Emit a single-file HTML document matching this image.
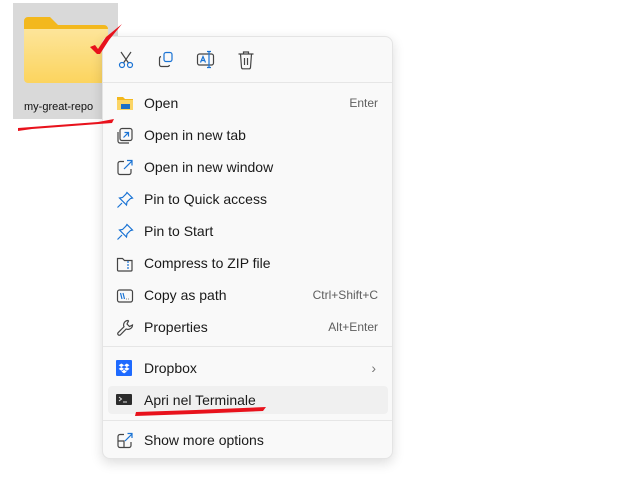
<!DOCTYPE html>
<html><head><meta charset="utf-8"><style>
*{margin:0;padding:0;box-sizing:border-box}
body{width:626px;height:480px;background:#fff;position:relative;overflow:hidden;font-family:"Segoe UI","Liberation Sans",sans-serif}
.sel{position:absolute;left:13px;top:3px;width:105px;height:116px;background:#d9d9d9}
.lbl{position:absolute;left:24px;top:101px;font-size:11px;color:#111;white-space:nowrap}
.menu{position:absolute;left:102px;top:36px;width:291px;height:423px;background:#f9f9f9;border:1px solid #e4e4e4;border-radius:8px;box-shadow:0 4px 12px rgba(0,0,0,.14)}
.it{position:absolute;left:0;width:289px;height:28px;font-size:14px;color:#1a1a1a}
.it .t{position:absolute;left:41px;top:50%;transform:translateY(-50%);white-space:nowrap}
.it .k{position:absolute;right:14px;top:50%;transform:translateY(-50%);font-size:12px;color:#5e5e5e}
.it svg{position:absolute;left:13px;top:6px}
.sep{position:absolute;left:0;width:289px;height:1px;background:#e6e6e6}
</style></head><body>
<div class="sel"></div>
<svg style="position:absolute;left:22px;top:15px" width="88" height="70" viewBox="0 0 88 70">
<defs><linearGradient id="g" x1="0" y1="0" x2="0" y2="1"><stop offset="0" stop-color="#fde59a"/><stop offset="1" stop-color="#fcd45e"/></linearGradient></defs>
<path d="M2 6a4 4 0 0 1 4-4h22l8 8h46a4 4 0 0 1 4 4v10H2z" fill="#f3b81d"/>
<path d="M2 14h84v50a4 4 0 0 1-4 4H6a4 4 0 0 1-4-4z" fill="url(#g)"/>
</svg>
<div class="lbl">my-great-repo</div>
<div class="menu">
<svg style="position:absolute;left:14px;top:14px" width="18" height="18" viewBox="0 0 18 18" fill="none" stroke="#1a73d4" stroke-width="1.2"><path d="M4 1l7.5 11M14 1L6.5 12" stroke="#444"/><circle cx="5" cy="14" r="2.5"/><circle cx="13" cy="14" r="2.5"/></svg>
<svg style="position:absolute;left:54px;top:14px" width="18" height="18" viewBox="0 0 18 18" fill="none" stroke-width="1.2"><rect x="7" y="1.5" width="8" height="9" rx="2" stroke="#1a73d4"/><path d="M4 5.5a2 2 0 0 0-1.5 2v6a2 2 0 0 0 2 2h6a2 2 0 0 0 2-1.5" stroke="#444"/></svg>
<svg style="position:absolute;left:93px;top:13px" width="20" height="20" viewBox="0 0 20 20" fill="none" stroke-width="1.2"><rect x="1.5" y="4" width="16" height="11" rx="2" stroke="#444"/><path d="M4.5 12.5l2.5-6 2.5 6M5.5 10.5h3" stroke="#1a73d4"/><path d="M13 1.5v16M11 1.5h4M11 17.5h4" stroke="#1a73d4"/></svg>
<svg style="position:absolute;left:134px;top:13px" width="18" height="20" viewBox="0 0 18 20" fill="none" stroke="#444" stroke-width="1.2"><path d="M1.5 4h15M6.5 4V2h5v2M3.5 4l1 13.5a1.5 1.5 0 0 0 1.5 1.3h6a1.5 1.5 0 0 0 1.5-1.3L14.5 4M7.5 8v7M10.5 8v7"/></svg>
<div class="sep" style="top:45px"></div>
<div class="it" style="top:52px"><svg width="18" height="16" viewBox="0 0 18 16"><path d="M1 2h6l2 2h8v11H1z" fill="#f3b81d"/><path d="M1 5h16v10H1z" fill="#fbd566"/><rect x="5" y="9" width="9" height="5" fill="#1d6fc6"/></svg><span class="t">Open</span><span class="k">Enter</span></div>
<div class="it" style="top:84px"><svg width="18" height="18" viewBox="0 0 18 18" fill="none" stroke-width="1.2"><rect x="4" y="1.5" width="12" height="12" rx="2" stroke="#444"/><path d="M2 5v9a2 2 0 0 0 2 2h9" stroke="#444"/><path d="M7.5 10.5l5-5M8.5 5.5h4v4" stroke="#1a73d4"/></svg><span class="t">Open in new tab</span></div>
<div class="it" style="top:116px"><svg width="18" height="18" viewBox="0 0 18 18" fill="none" stroke-width="1.2"><path d="M8 2.5H4a2 2 0 0 0-2 2v9a2 2 0 0 0 2 2h9a2 2 0 0 0 2-2V10" stroke="#444"/><path d="M8 10L16 2M11 1.5h5v5" stroke="#1a73d4"/></svg><span class="t">Open in new window</span></div>
<div class="it" style="top:148px"><svg width="18" height="18" viewBox="0 0 18 18" fill="none" stroke="#1a73d4" stroke-width="1.2"><path d="M11 1.5l5.5 5.5-2 .5-3.5 3.5-.5 3-7-7 3-.5L10 3z M6 12l-4.5 4.5"/></svg><span class="t">Pin to Quick access</span></div>
<div class="it" style="top:180px"><svg width="18" height="18" viewBox="0 0 18 18" fill="none" stroke="#1a73d4" stroke-width="1.2"><path d="M11 1.5l5.5 5.5-2 .5-3.5 3.5-.5 3-7-7 3-.5L10 3z M6 12l-4.5 4.5"/></svg><span class="t">Pin to Start</span></div>
<div class="it" style="top:212px"><svg width="18" height="18" viewBox="0 0 18 18" fill="none" stroke-width="1.2"><path d="M1.5 3.5h5l2 2h7.5v9.5a1 1 0 0 1-1 1h-12.5a1 1 0 0 1-1-1z" stroke="#444"/><path d="M12 6v2M12 9v2M12 12v2" stroke="#1a73d4"/></svg><span class="t">Compress to ZIP file</span></div>
<div class="it" style="top:244px"><svg width="18" height="18" viewBox="0 0 18 18" fill="none" stroke-width="1.2"><rect x="1.5" y="3" width="15" height="12" rx="2" stroke="#444"/><path d="M4.5 6l1.5 6M7 6l1.5 6" stroke="#1a73d4"/><path d="M10.5 12h.5M12.5 12h.5" stroke="#444"/></svg><span class="t">Copy as path</span><span class="k">Ctrl+Shift+C</span></div>
<div class="it" style="top:276px"><svg width="18" height="18" viewBox="0 0 18 18" fill="none" stroke="#444" stroke-width="1.2"><path d="M12 1.5a4.5 4.5 0 0 0-4 6.3L2 13.8a1.6 1.6 0 0 0 2.2 2.2l6-6A4.5 4.5 0 0 0 16.5 6l-3 1.5-2.5-2.5 1.5-3z"/></svg><span class="t">Properties</span><span class="k">Alt+Enter</span></div>
<div class="sep" style="top:309px"></div>
<div class="it" style="top:317px"><svg width="18" height="18" viewBox="0 0 18 18"><rect width="16" height="16" rx="1" fill="#1e6aff"/><path d="M5 4l3 2-3 2-3-2zM11 4l3 2-3 2-3-2zM5 8l3 2-3 2-3-2zM11 8l3 2-3 2-3-2zM8 11l3 2-3 2-3-2z" fill="#fff" transform="translate(0,-1) scale(.9) translate(1,1)"/></svg><span class="t">Dropbox</span><span class="k" style="font-size:14px;color:#777;right:16px">›</span></div>
<div class="it" style="top:349px;left:5px;width:280px;height:28px;background:#f0f0f0;border-radius:4px"><svg width="18" height="16" viewBox="0 0 18 16" style="left:8px"><rect y="2" width="16" height="11" rx="1" fill="#2b2b2b"/><path d="M3 5l2.5 2L3 9M7 10h4" stroke="#ddd" stroke-width="1" fill="none"/></svg><span class="t" style="left:36px">Apri nel Terminale</span></div>
<div class="sep" style="top:383px"></div>
<div class="it" style="top:389px"><svg width="18" height="18" viewBox="0 0 18 18" fill="none" stroke-width="1.2"><path d="M8 2.5H4a2 2 0 0 0-2 2v9a2 2 0 0 0 2 2h9a2 2 0 0 0 2-2V10M2 9h6v6.5" stroke="#444"/><path d="M9 9l7-7M11.5 1.5h4.5v4.5" stroke="#1a73d4"/></svg><span class="t">Show more options</span></div>
</div>
<svg style="position:absolute;left:0;top:0" width="626" height="480">
<path d="M90 47l5-2 3 4 8-12 16-13-13 16-9 14-3 0z" fill="#e8121c"/>
<path d="M18 128l40-3 40-3 16-3-2 4-40 3-40 3-14 2z" fill="#e8121c"/>
<path d="M136 412l60-2 70-3-3 4-70 3-58 2z" fill="#e8121c"/>
</svg>
</body></html>
